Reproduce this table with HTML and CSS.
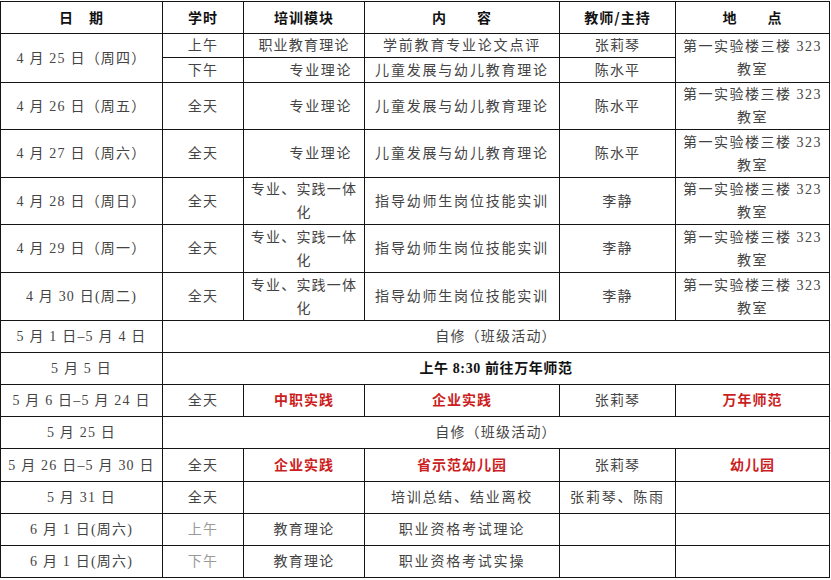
FILE: index.html
```html
<!DOCTYPE html>
<html lang="zh-CN">
<head>
<meta charset="utf-8">
<title>培训日程安排</title>
<link rel="stylesheet" href="styles.css">
</head>
<body>
<table class="sched">
  <colgroup>
    <col class="c-date">
    <col class="c-time">
    <col class="c-mod">
    <col class="c-cont">
    <col class="c-teach">
    <col class="c-loc">
  </colgroup>
  <tr class="h32 head">
    <th>日　期</th>
    <th>学时</th>
    <th>培训模块</th>
    <th>内　　容</th>
    <th>教师/主持</th>
    <th>地　　点</th>
  </tr>
  <tr class="h24">
    <td rowspan="2">4 月 25 日（周四）</td>
    <td>上午</td>
    <td>职业教育理论</td>
    <td class="wide">学前教育专业论文点评</td>
    <td>张莉琴</td>
    <td rowspan="2" class="loc">第一实验楼三楼 323<br>教室</td>
  </tr>
  <tr class="h25">
    <td>下午</td>
    <td class="rt">专业理论</td>
    <td class="wide">儿童发展与幼儿教育理论</td>
    <td>陈水平</td>
  </tr>
  <tr class="h47">
    <td>4 月 26 日（周五）</td>
    <td>全天</td>
    <td class="rt">专业理论</td>
    <td class="wide">儿童发展与幼儿教育理论</td>
    <td>陈水平</td>
    <td class="loc">第一实验楼三楼 323<br>教室</td>
  </tr>
  <tr class="h48">
    <td>4 月 27 日（周六）</td>
    <td>全天</td>
    <td class="rt">专业理论</td>
    <td class="wide">儿童发展与幼儿教育理论</td>
    <td>陈水平</td>
    <td class="loc">第一实验楼三楼 323<br>教室</td>
  </tr>
  <tr class="h47">
    <td>4 月 28 日（周日）</td>
    <td>全天</td>
    <td>专业、实践一体<br>化</td>
    <td class="wide">指导幼师生岗位技能实训</td>
    <td>李静</td>
    <td class="loc">第一实验楼三楼 323<br>教室</td>
  </tr>
  <tr class="h48">
    <td>4 月 29 日（周一）</td>
    <td>全天</td>
    <td>专业、实践一体<br>化</td>
    <td class="wide">指导幼师生岗位技能实训</td>
    <td>李静</td>
    <td class="loc">第一实验楼三楼 323<br>教室</td>
  </tr>
  <tr class="h48">
    <td>4 月 30 日(周二)</td>
    <td>全天</td>
    <td>专业、实践一体<br>化</td>
    <td class="wide">指导幼师生岗位技能实训</td>
    <td>李静</td>
    <td class="loc">第一实验楼三楼 323<br>教室</td>
  </tr>
  <tr class="h32">
    <td>5 月 1 日–5 月 4 日</td>
    <td colspan="5">自修（班级活动）</td>
  </tr>
  <tr class="h32">
    <td>5 月 5 日</td>
    <td colspan="5" class="strong">上午 8:30 前往万年师范</td>
  </tr>
  <tr class="h32">
    <td>5 月 6 日–5 月 24 日</td>
    <td>全天</td>
    <td class="red">中职实践</td>
    <td class="red">企业实践</td>
    <td>张莉琴</td>
    <td class="red">万年师范</td>
  </tr>
  <tr class="h32">
    <td>5 月 25 日</td>
    <td colspan="5">自修（班级活动）</td>
  </tr>
  <tr class="h33">
    <td>5 月 26 日–5 月 30 日</td>
    <td>全天</td>
    <td class="red">企业实践</td>
    <td class="red">省示范幼儿园</td>
    <td>张莉琴</td>
    <td class="red">幼儿园</td>
  </tr>
  <tr class="h32">
    <td>5 月 31 日</td>
    <td>全天</td>
    <td></td>
    <td class="wide">培训总结、结业离校</td>
    <td class="wide">张莉琴、陈雨</td>
    <td></td>
  </tr>
  <tr class="h32">
    <td>6 月 1 日(周六)</td>
    <td class="faint">上午</td>
    <td>教育理论</td>
    <td class="wide">职业资格考试理论</td>
    <td></td>
    <td></td>
  </tr>
  <tr class="h32">
    <td>6 月 1 日(周六)</td>
    <td class="faint">下午</td>
    <td>教育理论</td>
    <td class="wide">职业资格考试实操</td>
    <td></td>
    <td></td>
  </tr>
</table>
</body>
</html>
```
FILE: styles.css
```css
html, body {
  margin: 0;
  padding: 0;
  background: #ffffff;
}

.sched {
  border-collapse: collapse;
  table-layout: fixed;
  width: 829px;
  margin-top: 1px;
  font-family: "Liberation Serif", "Noto Sans CJK SC", serif;
  font-size: 14px;
  color: #444444;
  letter-spacing: 1.2px;
}

.c-date { width: 162px; }
.c-time { width: 81px; }
.c-mod { width: 121px; }
.c-cont { width: 195px; }
.c-teach { width: 116px; }
.c-loc { width: 154px; }

.sched th,
.sched td {
  border: 1px solid #141414;
  padding: 0 2px;
  text-align: center;
  vertical-align: middle;
  line-height: 23px;
  white-space: nowrap;
  overflow: hidden;
}

.sched th {
  font-family: "Noto Sans CJK SC", sans-serif;
  font-weight: 700;
  color: #111111;
  letter-spacing: 1px;
}

.h24 { height: 24px; }
.h25 { height: 25px; }
.h32 { height: 32px; }
.h33 { height: 33px; }
.h47 { height: 47px; }
.h48 { height: 48px; }

.sched td.rt {
  text-align: right;
  padding-right: 12px;
  letter-spacing: 1.6px;
}

.sched td.wide {
  letter-spacing: 1.8px;
}

.sched td.loc {
  letter-spacing: 1.5px;
}

.sched td.red {
  color: #cc1e1e;
  font-weight: 700;
  letter-spacing: 1px;
}

.sched td.strong {
  color: #111111;
  font-weight: 700;
  letter-spacing: 0.6px;
}

.sched td.faint {
  color: #9a9a9a;
}
```
